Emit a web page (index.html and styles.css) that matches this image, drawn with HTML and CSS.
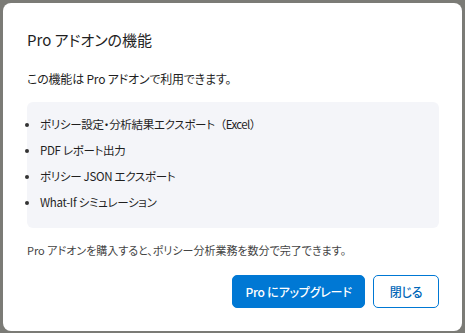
FILE: index.html
```html
<!DOCTYPE html>
<html lang="ja">
<head>
<meta charset="utf-8">
<link rel="stylesheet" href="styles.css">
</head>
<body>
<div class="backdrop">
  <div class="dialog">
    <h2 class="title">Pro アドオンの機能</h2>
    <p class="lead">この機能は Pro アドオンで利用できます。</p>
    <ul class="features">
      <li>ポリシー設定・分析結果エクスポート<span class="paren">（Excel）</span></li>
      <li>PDF レポート出力</li>
      <li>ポリシー JSON エクスポート</li>
      <li>What-If シミュレーション</li>
    </ul>
    <p class="note">Pro アドオンを購入すると、ポリシー分析業務を数分で完了できます。</p>
    <div class="actions">
      <button class="btn primary">Pro にアップグレード</button>
      <button class="btn secondary">閉じる</button>
    </div>
  </div>
</div>
</body>
</html>
```
FILE: styles.css
```css
html, body {
  margin: 0;
  padding: 0;
  width: 465px;
  height: 333px;
  overflow: hidden;
}
body {
  font-family: "Noto Sans CJK JP", "Noto Sans", sans-serif;
  font-feature-settings: "palt";
  color: #1f1f1f;
  background: #7b7b76;
}
.backdrop {
  padding: 3px 3px 0 3px;
  height: 330px;
  box-sizing: border-box;
}
.dialog {
  background: #fff;
  border-radius: 8px;
  height: 328px;
  padding: 23px 23px 0 24px;
  box-sizing: border-box;
}
.title {
  margin: 0;
  font-size: 15px;
  font-weight: 400;
  line-height: 28px;
}
.lead {
  margin: 15px 0 0;
  font-size: 12px;
  letter-spacing: -0.2px;
  line-height: 20px;
}
.features {
  margin: 13px 0 0;
  padding: 9px 0 13px 13px;
  background: #f4f5f9;
  border-radius: 6px;
  font-size: 11.5px;
  letter-spacing: -0.3px;
  line-height: 26px;
  list-style: disc outside;
}
.features li::marker {
  color: #333;
  font-size: 10px;
}
.paren {
  font-feature-settings: normal;
  letter-spacing: -0.6px;
}
.note {
  margin: 12px 0 0;
  font-size: 11px;
  line-height: 20px;
  color: #444;
}
.actions {
  display: flex;
  justify-content: flex-end;
  gap: 8px;
  margin-top: 15px;
}
.btn {
  font-family: inherit;
  font-feature-settings: "palt";
  font-size: 12px;
  letter-spacing: -0.2px;
  font-weight: 500;
  height: 33px;
  border-radius: 5px;
  box-sizing: border-box;
  padding: 0;
  cursor: pointer;
}
.primary {
  width: 133px;
  background: #0078d4;
  color: #fff;
  border: 1px solid #0078d4;
}
.secondary {
  width: 66px;
  background: #fff;
  color: #0067b8;
  border: 1px solid #0078d4;
}
```
